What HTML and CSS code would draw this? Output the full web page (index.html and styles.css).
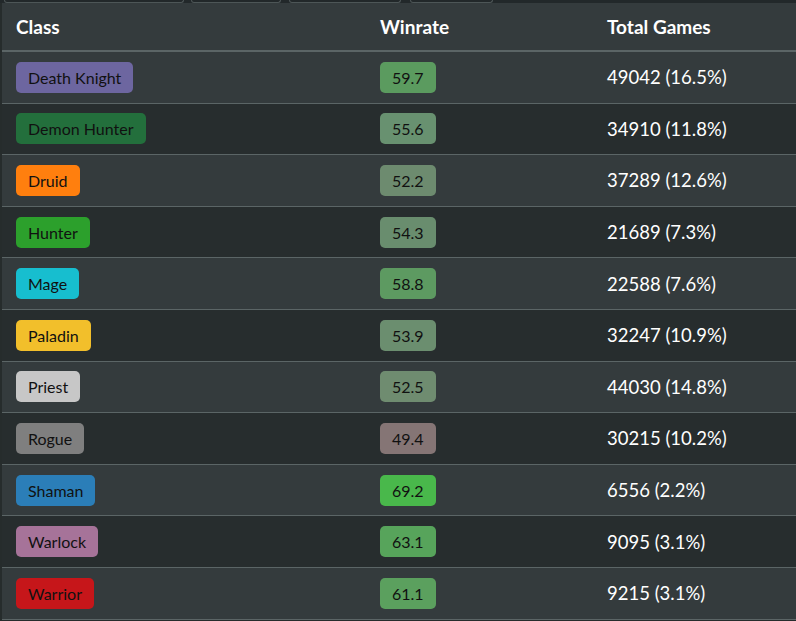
FILE: index.html
```html
<!DOCTYPE html>
<html>
<head>
    <title>Class Winrates</title>
    <link rel="stylesheet" href="styles.css">
</head>
<body>

    <div class="tabs">
        <div class="tab tab-1"></div>
        <div class="tab tab-2"></div>
        <div class="tab tab-3"></div>
        <div class="tab tab-4"></div>
    </div>

    <div class="table">
        <div class="row head">
            <div class="cell">Class</div>
            <div class="cell">Winrate</div>
            <div class="cell">Total Games</div>
        </div>
        <div class="row">
            <div class="cell"><span class="badge" style="background:#6d66a0">Death Knight</span></div>
            <div class="cell"><span class="badge" style="background:#5b9b5f">59.7</span></div>
            <div class="cell games">49042 (16.5%)</div>
        </div>
        <div class="row">
            <div class="cell"><span class="badge" style="background:#236f3c">Demon Hunter</span></div>
            <div class="cell"><span class="badge" style="background:#689170">55.6</span></div>
            <div class="cell games">34910 (11.8%)</div>
        </div>
        <div class="row">
            <div class="cell"><span class="badge" style="background:#ff7f0e">Druid</span></div>
            <div class="cell"><span class="badge" style="background:#6d8b6f">52.2</span></div>
            <div class="cell games">37289 (12.6%)</div>
        </div>
        <div class="row">
            <div class="cell"><span class="badge" style="background:#2ca02c">Hunter</span></div>
            <div class="cell"><span class="badge" style="background:#698d6e">54.3</span></div>
            <div class="cell games">21689 (7.3%)</div>
        </div>
        <div class="row">
            <div class="cell"><span class="badge" style="background:#17becf">Mage</span></div>
            <div class="cell"><span class="badge" style="background:#5d9a61">58.8</span></div>
            <div class="cell games">22588 (7.6%)</div>
        </div>
        <div class="row">
            <div class="cell"><span class="badge" style="background:#f2bf2b">Paladin</span></div>
            <div class="cell"><span class="badge" style="background:#6b8e6f">53.9</span></div>
            <div class="cell games">32247 (10.9%)</div>
        </div>
        <div class="row">
            <div class="cell"><span class="badge" style="background:#c7c7c7">Priest</span></div>
            <div class="cell"><span class="badge" style="background:#6f8c70">52.5</span></div>
            <div class="cell games">44030 (14.8%)</div>
        </div>
        <div class="row">
            <div class="cell"><span class="badge" style="background:#7f7f7f">Rogue</span></div>
            <div class="cell"><span class="badge" style="background:#857575">49.4</span></div>
            <div class="cell games">30215 (10.2%)</div>
        </div>
        <div class="row">
            <div class="cell"><span class="badge" style="background:#2b7eb8">Shaman</span></div>
            <div class="cell"><span class="badge" style="background:#49b84b">69.2</span></div>
            <div class="cell games">6556 (2.2%)</div>
        </div>
        <div class="row">
            <div class="cell"><span class="badge" style="background:#a67399">Warlock</span></div>
            <div class="cell"><span class="badge" style="background:#57a45b">63.1</span></div>
            <div class="cell games">9095 (3.1%)</div>
        </div>
        <div class="row">
            <div class="cell"><span class="badge" style="background:#c6161a">Warrior</span></div>
            <div class="cell"><span class="badge" style="background:#5ba05e">61.1</span></div>
            <div class="cell games">9215 (3.1%)</div>
        </div>
    </div>

</body>
</html>
```

FILE: styles.css
```css
body {
    margin: 0;
    font-family: Lato, "Open Sans", sans-serif;
    background-color: #262c2c;
    color: #fff;
    overflow: hidden;
}
.tabs {
    display: flex;
    height: 3px;
    padding-left: 4px;
    background-color: #22282a;
    overflow: hidden;
}
.tab {
    height: 2px;
    border: 1px solid #4d5657;
    border-top: none;
    border-radius: 0 0 7px 7px;
    margin-right: 7px;
}
.tab-1 { width: 178px; }
.tab-2 { width: 88px; }
.tab-3 { width: 110px; margin-left: 1px; }
.tab-4 { width: 81px; margin-left: 2px; }
.table {
    margin-left: 2px;
}
.row {
    display: grid;
    grid-template-columns: 364px 227px 1fr;
    align-items: center;
    height: 50.6px;
    border-bottom: 1px solid #5b6566;
}
.row:nth-child(even) {
    background-color: #343b3d;
}
.row:nth-child(odd) {
    background-color: #272d2e;
}
.head {
    height: 47px;
    border-bottom: 2px solid #5b6566;
    font-weight: bold;
    font-size: 19px;
}
.row.head {
    background-color: #343b3d;
}
.cell {
    padding-left: 14px;
}
.badge {
    display: inline-block;
    height: 31px;
    line-height: 31px;
    padding: 0 12px;
    border-radius: 5px;
    font-size: 16px;
    color: #111;
}
.games {
    font-size: 18.5px;
}
```
